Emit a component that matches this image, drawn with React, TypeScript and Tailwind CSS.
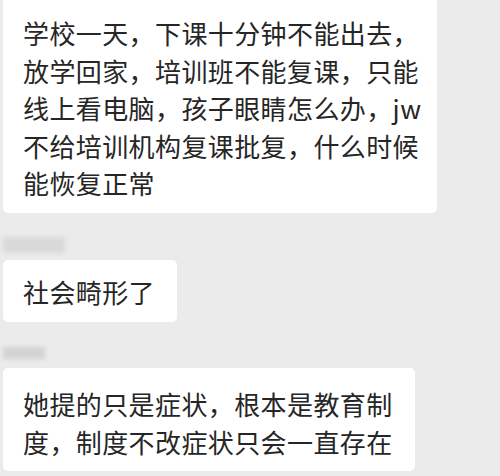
export default function App() {
  return (
    <div
      className="w-[500px] h-[476px] overflow-hidden bg-[#ebebeb] pl-[3px] flex flex-col items-start text-[#262626]"
      style={{ fontFamily: '"Noto Sans CJK SC", "Noto Sans", sans-serif' }}
    >
      <div className="w-[434px] bg-white rounded-[5px] rounded-t-none pl-[20px] pr-[12px] pt-[14px] pb-[11px] text-[26px] tracking-[0.4px] leading-[37.5px]">
        学校一天，下课十分钟不能出去，放学回家，培训班不能复课，只能线上看电脑，孩子眼睛怎么办，jw不给培训机构复课批复，什么时候能恢复正常
      </div>

      {/* blurred name */}
      <div className="mt-[24px] w-[62px] h-[16px] bg-[#d9d9d9] blur-[2px]" />

      <div className="mt-[7px] bg-white rounded-[5px] pl-[20px] pr-[22px] pt-[13px] pb-[12px] text-[26px] tracking-[0.4px] leading-[37.5px]">
        社会畸形了
      </div>

      <div className="mt-[25px] w-[42px] h-[12px] bg-[#d3d3d3] blur-[2px]" />

      <div className="mt-[9px] w-[412px] bg-white rounded-[5px] pl-[20px] pr-[20px] pt-[17px] pb-[11px] text-[26px] tracking-[0.4px] leading-[37.5px]">
        她提的只是症状，根本是教育制度，制度不改症状只会一直存在
      </div>
    </div>
  );
}
